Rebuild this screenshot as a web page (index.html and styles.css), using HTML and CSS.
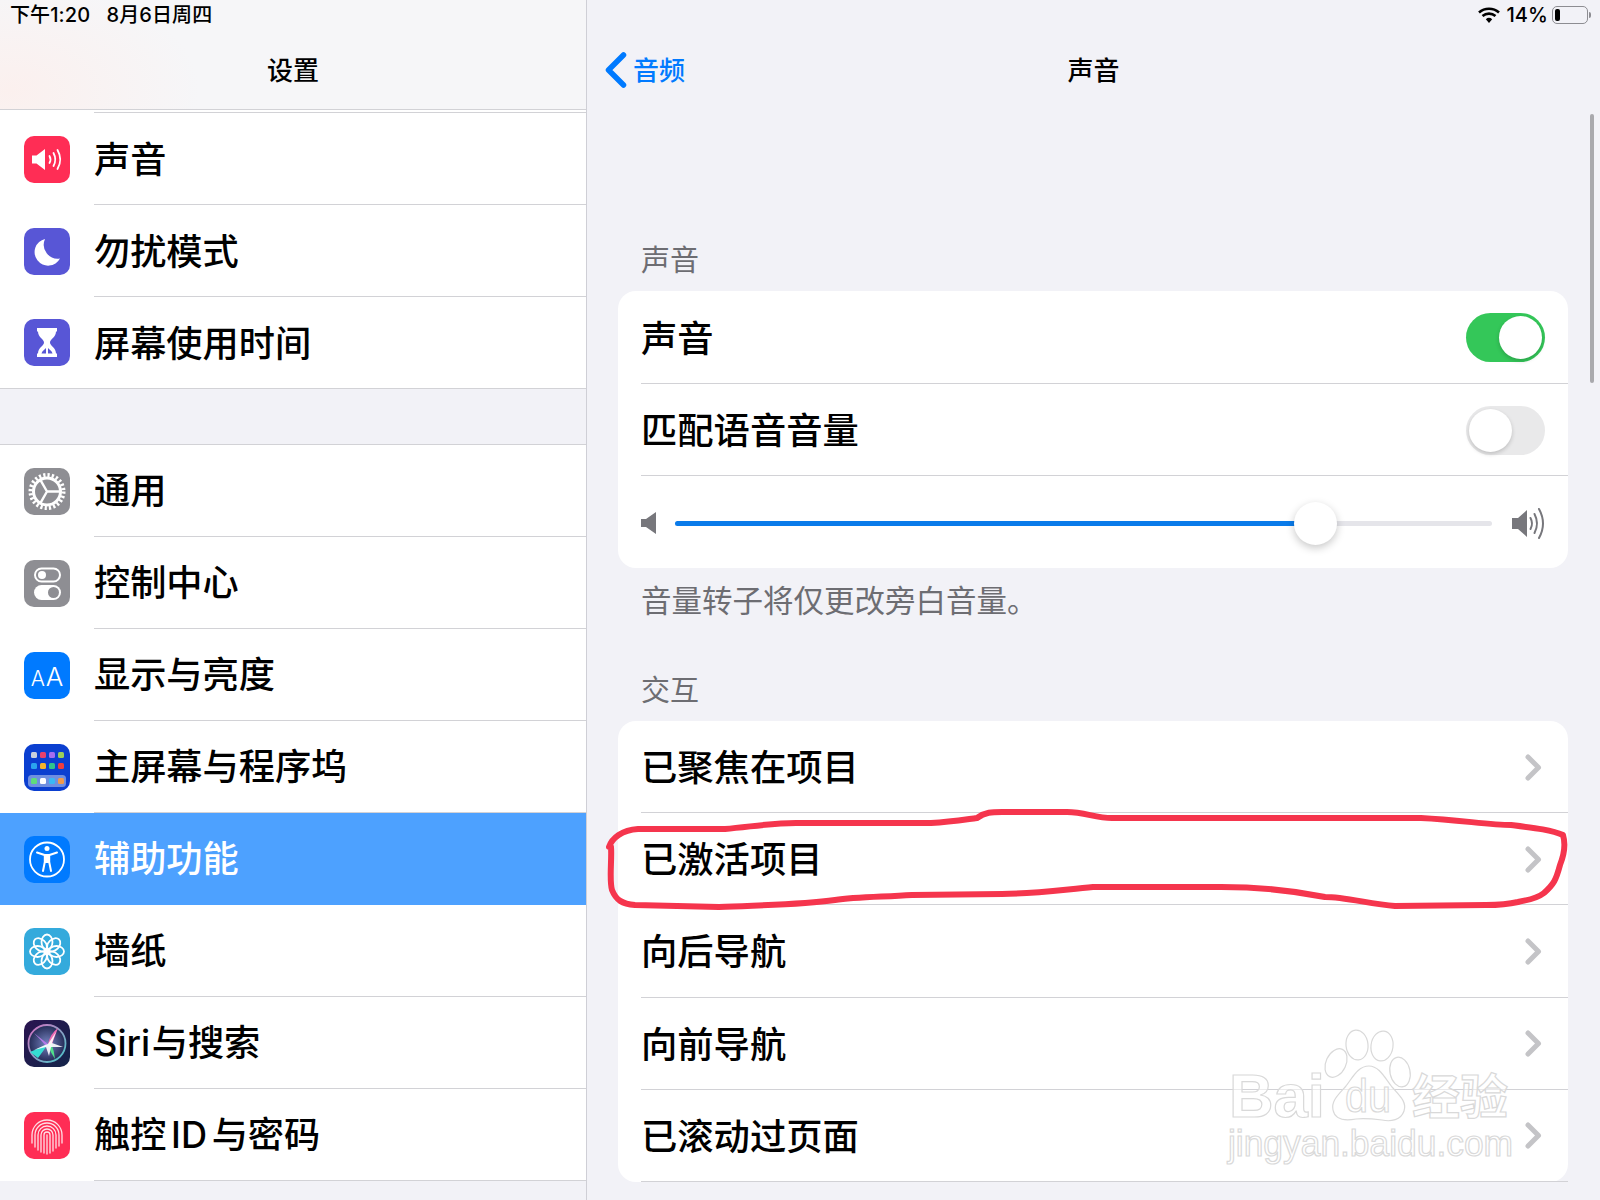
FILE: index.html
```html
<!DOCTYPE html>
<html lang="zh-CN">
<head>
    <meta charset="UTF-8">
    <title>声音</title>
    <link rel="stylesheet" href="styles.css">
</head>
<body>
    <div class="screen">
        <aside class="sidebar">
            <header class="side-head">
                <div class="status">下午1:20&nbsp;&nbsp;&nbsp;8月6日周四</div>
                <div class="nav-title">设置</div>
            </header>

            <ul class="side-list first-group">
                <li class="side-row">
                    <svg class="app-icon" viewBox="0 0 46 47"><rect width="46" height="47" rx="10" fill="#ff2d55"/><path d="M8 19.500h4.500L21 13v21l-8.500-6.500H8z" fill="#fff"/><g fill="none" stroke="#fff" stroke-width="1.800" stroke-linecap="round"><path d="M25.500 20q2 3.500 0 7"/><path d="M29.500 17q3.500 6.500 0 13"/><path d="M33.500 14q5.500 9.500 0 19"/></g></svg>
                    <div class="side-label">声音</div>
                </li>
                <li class="side-row">
                    <svg class="app-icon" viewBox="0 0 46 47"><rect width="46" height="47" rx="10" fill="#5856d6"/><path d="M21 11a13.500 13.500 0 1 0 15 19.500A14 14 0 0 1 21 11z" fill="#fff"/></svg>
                    <div class="side-label">勿扰模式</div>
                </li>
                <li class="side-row">
                    <svg class="app-icon" viewBox="0 0 46 47"><rect width="46" height="47" rx="10" fill="#5856d6"/><path d="M13 9h20v3.500h-1c0 6-6 7.500-6 11s6 5 6 11h1V38H13v-3.500h1c0-6 6-7.500 6-11s-6-5-6-11h-1z" fill="#fff"/><path d="M17.500 34.500c.5-2.500 3-4 4.500-5.500v5.500zM28.500 34.500c-.5-2.500-3-4-4.500-5.500v5.500z" fill="#5856d6"/></svg>
                    <div class="side-label">屏幕使用时间</div>
                </li>
            </ul>

            <ul class="side-list">
                <li class="side-row">
                    <svg class="app-icon" viewBox="0 0 46 47"><rect width="46" height="47" rx="10" fill="#8e8e93"/><circle cx="23" cy="23.500" r="16.500" fill="none" stroke="#fff" stroke-width="4" stroke-dasharray="2.200 2.120"/><circle cx="23" cy="23.500" r="13.500" fill="none" stroke="#fff" stroke-width="3"/><path d="M23 23.500H36M23 23.500l-6.500-11.300M23 23.500l-6.500 11.300" fill="none" stroke="#fff" stroke-width="2.400"/></svg>
                    <div class="side-label">通用</div>
                </li>
                <li class="side-row">
                    <svg class="app-icon" viewBox="0 0 46 47"><rect width="46" height="47" rx="10" fill="#8e8e93"/><rect x="11" y="8.500" width="25" height="13" rx="6.500" fill="none" stroke="#fff" stroke-width="2"/><circle cx="18" cy="15" r="4" fill="#fff"/><rect x="10" y="25" width="27" height="15" rx="7.500" fill="#fff"/><circle cx="29.500" cy="32.500" r="5.500" fill="#8e8e93"/></svg>
                    <div class="side-label">控制中心</div>
                </li>
                <li class="side-row">
                    <div class="app-icon aa-icon"><span class="aa-small">A</span>A</div>
                    <div class="side-label">显示与亮度</div>
                </li>
                <li class="side-row">
                    <svg class="app-icon" viewBox="0 0 46 47"><rect width="46" height="47" rx="10" fill="#0b3fd0"/><g><rect x="7" y="8" width="6" height="6" rx="1.500" fill="#c9d0dc"/><rect x="16" y="8" width="6" height="6" rx="1.500" fill="#e8416d"/><rect x="25" y="8" width="6" height="6" rx="1.500" fill="#a56df0"/><rect x="34" y="8" width="6" height="6" rx="1.500" fill="#9ccf5a"/><rect x="7" y="19" width="6" height="6" rx="1.500" fill="#2aa5ee"/><rect x="16" y="19" width="6" height="6" rx="1.500" fill="#f5b32c"/><rect x="25" y="19" width="6" height="6" rx="1.500" fill="#2fc48d"/><rect x="34" y="19" width="6" height="6" rx="1.500" fill="#ef3e3e"/></g><rect x="4" y="31" width="38" height="12" rx="3.500" fill="#6f8fe0"/><rect x="7" y="34" width="6" height="6" rx="1.500" fill="#5fdc7a"/><rect x="16" y="34" width="6" height="6" rx="1.500" fill="#fff"/><rect x="25" y="34" width="6" height="6" rx="1.500" fill="#39b8f5"/><rect x="34" y="34" width="6" height="6" rx="1.500" fill="#f09a4a"/></svg>
                    <div class="side-label">主屏幕与程序坞</div>
                </li>
                <li class="side-row selected">
                    <svg class="app-icon" viewBox="0 0 46 47"><rect width="46" height="47" rx="10" fill="#007aff"/><circle cx="23" cy="23.500" r="17" fill="none" stroke="#fff" stroke-width="1.800"/><circle cx="23" cy="12.500" r="2.500" fill="#fff"/><path d="M13 16.500l7.500 2.500h5l7.500-2.500M20.800 19v7l-1.800 9M25.200 19v7l1.800 9" fill="none" stroke="#fff" stroke-width="2" stroke-linecap="round" stroke-linejoin="round"/><path d="M20.800 19h4.400v8h-4.400z" fill="#fff"/></svg>
                    <div class="side-label">辅助功能</div>
                </li>
                <li class="side-row">
                    <svg class="app-icon" viewBox="0 0 46 47"><rect width="46" height="47" rx="10" fill="#34aadc"/><g fill="none" stroke="#fff" stroke-width="1.800"><ellipse cx="23" cy="14" rx="5.500" ry="7.500"/><ellipse cx="23" cy="14" rx="5.500" ry="7.500" transform="rotate(45 23 23.500)"/><ellipse cx="23" cy="14" rx="5.500" ry="7.500" transform="rotate(90 23 23.500)"/><ellipse cx="23" cy="14" rx="5.500" ry="7.500" transform="rotate(135 23 23.500)"/><ellipse cx="23" cy="14" rx="5.500" ry="7.500" transform="rotate(180 23 23.500)"/><ellipse cx="23" cy="14" rx="5.500" ry="7.500" transform="rotate(225 23 23.500)"/><ellipse cx="23" cy="14" rx="5.500" ry="7.500" transform="rotate(270 23 23.500)"/><ellipse cx="23" cy="14" rx="5.500" ry="7.500" transform="rotate(315 23 23.500)"/></g><circle cx="23" cy="23.500" r="2.500" fill="#fff"/></svg>
                    <div class="side-label">墙纸</div>
                </li>
                <li class="side-row">
                    <svg class="app-icon" viewBox="0 0 46 47">
                        <defs>
                            <linearGradient id="siri-bg" x1="0" y1="0" x2="1" y2="1"><stop offset="0" stop-color="#2a1450"/><stop offset="1" stop-color="#14254a"/></linearGradient>
                            <radialGradient id="siri-ball"><stop offset="0" stop-color="#7583c0"/><stop offset="1" stop-color="#232a55"/></radialGradient>
                            <linearGradient id="siri-ring" x1="0" y1="0" x2="1" y2="1"><stop offset="0" stop-color="#d86fc0"/><stop offset="1" stop-color="#45c8c8"/></linearGradient>
                        </defs>
                        <rect width="46" height="47" rx="10" fill="url(#siri-bg)"/>
                        <circle cx="23" cy="23.500" r="18.500" fill="url(#siri-ball)" stroke="url(#siri-ring)" stroke-width="1.800"/>
                        <path d="M6 32Q18 27 24 24Q20 30 14 38z" fill="#35dcd2"/>
                        <path d="M24 24Q26 32 31 39Q30 30 27 23z" fill="#4fe08a"/>
                        <path d="M24 24Q26 14 34 8Q31 16 28 24z" fill="#ef6ab4"/>
                        <path d="M24 24Q16 18 10 13Q17 20 22 26z" fill="#b47ae8"/>
                        <path d="M24 24L32 12 28 23l11 4-12 0-2 9-3-9-12 3 11-5z" fill="#fff" opacity=".9"/>
                    </svg>
                    <div class="side-label tight-siri">Siri 与搜索</div>
                </li>
                <li class="side-row">
                    <svg class="app-icon" viewBox="0 0 46 47"><rect width="46" height="47" rx="10" fill="#ff2d55"/><g fill="none" stroke="#fff" stroke-opacity=".85" stroke-width="1.300" stroke-linecap="round"><path d="M8 31V23a15 15 0 0 1 30 0v8"/><path d="M11 35V23a12 12 0 0 1 24 0v11"/><path d="M14 38V23a9 9 0 0 1 18 0v13"/><path d="M17 40V23a6 6 0 0 1 12 0v16"/><path d="M20 41V23a3 3 0 0 1 6 0v18"/><path d="M23 23v19"/></g></svg>
                    <div class="side-label tight-id">触控 ID 与密码</div>
                </li>
            </ul>
        </aside>

        <main class="detail">
            <header class="detail-head">
                <div class="status status-right">
                    <svg class="wifi" viewBox="0 0 22 16"><path d="M11 16l-3.200-3.800a5 5 0 0 1 6.400 0z" fill="#000"/><path d="M1 5.500a15 15 0 0 1 20 0M4.500 9a10 10 0 0 1 13 0" fill="none" stroke="#000" stroke-width="2.600"/></svg>
                    <span>14%</span>
                    <div class="battery"><div class="battery-fill"></div></div>
                    <div class="battery-nub"></div>
                </div>
                <div class="detail-nav">
                    <div class="back">
                        <svg class="back-arrow" viewBox="0 0 22 36"><path d="M18.500 3L3.500 18l15 15" fill="none" stroke="#007aff" stroke-width="5.500" stroke-linecap="round" stroke-linejoin="round"/></svg>
                        <span class="back-text">音频</span>
                    </div>
                    <div class="nav-title">声音</div>
                    <div></div>
                </div>
            </header>

            <div class="scroll-thumb"></div>

            <div class="detail-body">
                <div class="section-title top">声音</div>
                <section class="card">
                    <div class="card-row tall"><div class="card-inner">
                        <span>声音</span>
                        <div class="toggle on"><div class="knob"></div></div>
                    </div></div>
                    <div class="card-row"><div class="card-inner">
                        <span>匹配语音音量</span>
                        <div class="toggle"><div class="knob"></div></div>
                    </div></div>
                    <div class="slider-row">
                        <svg class="vol-low" viewBox="0 0 15 22"><path d="M0 7h5L15 0v22L5 15H0z" fill="#77777c"/></svg>
                        <div class="track">
                            <div class="track-fill"></div>
                            <div class="thumb"></div>
                        </div>
                        <svg class="vol-high" viewBox="0 0 34 33"><path d="M0 11h6l9-8v27l-9-8H0z" fill="#77777c"/><g fill="none" stroke="#77777c" stroke-width="2" stroke-linecap="round"><path d="M18.500 11q3 5.500 0 11"/><path d="M22.500 7q5 9.500 0 19"/><path d="M27 2q8 14.500 0 29"/></g></svg>
                    </div>
                </section>
                <p class="card-note">音量转子将仅更改旁白音量。</p>

                <div class="section-title">交互</div>
                <section class="card nav-card">
                    <div class="card-row short"><div class="card-inner"><span>已聚焦在项目</span><svg class="chevron" viewBox="0 0 17 27"><path d="M3 3l10.500 10.500L3 24" fill="none" stroke="#c4c4c7" stroke-width="5" stroke-linecap="round" stroke-linejoin="round"/></svg></div></div>
                    <div class="card-row"><div class="card-inner"><span>已激活项目</span><svg class="chevron" viewBox="0 0 17 27"><path d="M3 3l10.500 10.500L3 24" fill="none" stroke="#c4c4c7" stroke-width="5" stroke-linecap="round" stroke-linejoin="round"/></svg></div></div>
                    <div class="card-row"><div class="card-inner"><span>向后导航</span><svg class="chevron" viewBox="0 0 17 27"><path d="M3 3l10.500 10.500L3 24" fill="none" stroke="#c4c4c7" stroke-width="5" stroke-linecap="round" stroke-linejoin="round"/></svg></div></div>
                    <div class="card-row"><div class="card-inner"><span>向前导航</span><svg class="chevron" viewBox="0 0 17 27"><path d="M3 3l10.500 10.500L3 24" fill="none" stroke="#c4c4c7" stroke-width="5" stroke-linecap="round" stroke-linejoin="round"/></svg></div></div>
                    <div class="card-row"><div class="card-inner"><span>已滚动过页面</span><svg class="chevron" viewBox="0 0 17 27"><path d="M3 3l10.500 10.500L3 24" fill="none" stroke="#c4c4c7" stroke-width="5" stroke-linecap="round" stroke-linejoin="round"/></svg></div></div>
                </section>
            </div>
        </main>

        <!-- marker drawn over the screenshot -->
        <svg class="overlay" viewBox="0 0 1600 1200">
            <path class="marker" d="M609 847C612 838 622 830 638 829L725 829C750 827 770 823 796 823L931 823C950 822 962 820 977 818C985 812 992 812 1002 812L1067 812C1085 812 1095 818 1112 818L1421 818C1460 820 1490 825 1511 825C1535 828 1552 830 1563 835C1566 845 1564 855 1560 865C1556 880 1554 884 1544 893C1535 900 1525 900 1518 902C1505 905 1495 905 1486 905L1395 906C1370 904 1345 897 1325 897C1290 890 1250 887 1221 887L1093 887C1060 890 1030 894 1002 894L912 895C880 897 855 897 835 900C800 905 760 905 719 907L635 905C622 904 616 900 612 890C609 880 612 860 611 847"/>
            <g class="paw">
                <ellipse cx="1336" cy="1063" rx="10" ry="15" transform="rotate(25 1336 1063)"/>
                <ellipse cx="1357" cy="1045" rx="11" ry="15" transform="rotate(-6 1357 1045)"/>
                <ellipse cx="1382" cy="1046" rx="11" ry="15" transform="rotate(8 1382 1046)"/>
                <ellipse cx="1400" cy="1072" rx="10" ry="15" transform="rotate(-12 1400 1072)"/>
                <path d="M1369 1066c10 0 16 12 23 21 8 9 15 15 12 24-3 9-13 11-22 9-8-1-17-2-26-1-11 2-21 1-23-9-2-9 5-15 13-24 7-9 12-20 23-20z"/>
            </g>
            <text class="wm wm-big" x="1229" y="1117" textLength="96" lengthAdjust="spacingAndGlyphs">Bai</text>
            <text class="wm wm-du" x="1345" y="1112" textLength="46" lengthAdjust="spacingAndGlyphs">du</text>
            <text class="wm wm-cn" x="1412" y="1114">经验</text>
            <text class="wm wm-url" x="1228" y="1156" textLength="285" lengthAdjust="spacingAndGlyphs">jingyan.baidu.com</text>
        </svg>
    </div>
</body>
</html>
```

FILE: styles.css
```css
/* Pantalla de ajustes */
* {
    box-sizing: border-box;
}

body {
    margin: 0;
    background-color: #f2f2f7;
    font-family: Inter, "Noto Sans CJK SC", sans-serif;
    color: #000;
}

ul {
    list-style: none;
    margin: 0;
    padding: 0;
}

.screen {
    position: relative;
    display: flex;
    width: 1600px;
    height: 1200px;
    overflow: hidden;
}

/* sidebar */
.sidebar {
    flex: 0 0 587px;
    height: 1200px;
    background-color: #f2f2f7;
    border-right: 1px solid #cfcfd6;
    overflow: hidden;
}

.side-head {
    height: 110px;
    border-bottom: 1px solid #d2d2d6;
    background-color: #f6f6f8;
    background-image: radial-gradient(ellipse 190px 110px at 10px 90px, #fbf0ee, rgba(251, 240, 238, 0));
}

.status {
    height: 30px;
    padding-left: 10px;
    font-size: 20px;
    font-weight: 500;
    letter-spacing: 0.1px;
    line-height: 30px;
    white-space: nowrap;
}

.nav-title {
    height: 80px;
    font-size: 26px;
    font-weight: 500;
    line-height: 82px;
    text-align: center;
}

.side-list {
    background-color: #fff;
    border-top: 1px solid #d2d2d6;
}

.first-group {
    padding-top: 2px;
    border-top: none;
    border-bottom: 1px solid #d2d2d6;
    margin-bottom: 55px;
}

.first-group::before {
    content: "";
    display: block;
    height: 1px;
    margin-left: 94px;
    background-color: #d2d2d6;
}

.side-row {
    display: flex;
    align-items: center;
    height: 92px;
    padding-left: 24px;
}

.first-group .side-label {
    padding-bottom: 3px;
}

.first-group .side-row:last-child {
    height: 91px;
}

.first-group .side-row:last-child .side-label {
    height: 91px;
    border-bottom: none;
}

.app-icon {
    flex: 0 0 46px;
    width: 46px;
    height: 47px;
    margin-right: 24px;
}

.side-label {
    display: flex;
    align-items: center;
    flex: 1;
    height: 92px;
    padding-bottom: 5px;
    font-size: 36.200px;
    font-weight: 500;
    border-bottom: 1px solid #d2d2d6;
    white-space: pre;
}

.side-label.tight-siri {
    word-spacing: -8px;
}

.side-label.tight-id {
    word-spacing: -5px;
}

.side-row.selected {
    background-color: #4da1ff;
    color: #fff;
}

.side-row.selected .side-label {
    border-bottom-color: #4da1ff;
}

.aa-icon {
    display: flex;
    align-items: baseline;
    justify-content: center;
    padding-top: 9px;
    border-radius: 10px;
    background-color: #007aff;
    color: #fff;
    font-size: 26px;
    font-weight: 300;
}

.aa-small {
    font-size: 21px;
    margin-right: 1px;
}

/* detail */
.detail {
    position: relative;
    flex: 1;
}

.detail-head {
    height: 110px;
}

.status-right {
    display: flex;
    align-items: center;
    justify-content: flex-end;
    padding: 0 9px 0 0;
}

.wifi {
    width: 22px;
    height: 16px;
    margin-right: 6px;
}

.battery {
    width: 36px;
    height: 18px;
    margin-left: 4px;
    padding: 2px;
    border: 1.500px solid #8d8d92;
    border-radius: 5px;
}

.battery-fill {
    width: 5px;
    height: 100%;
    border-radius: 2px;
    background-color: #000;
}

.battery-nub {
    width: 2px;
    height: 6px;
    margin-left: 1px;
    border-radius: 0 2px 2px 0;
    background-color: #8d8d92;
}

.detail-nav {
    display: grid;
    grid-template-columns: 1fr auto 1fr;
    align-items: center;
    height: 80px;
}

.back {
    display: flex;
    align-items: center;
    padding-left: 18px;
    color: #007aff;
    font-size: 26px;
    font-weight: 500;
}

.back-arrow {
    width: 22px;
    height: 36px;
    margin-right: 6px;
}

.back-text {
    margin-bottom: 3px;
}

.scroll-thumb {
    position: absolute;
    top: 114px;
    right: 6px;
    width: 4px;
    height: 269px;
    border-radius: 2px;
    background-color: #a9a9ad;
}

.detail-body {
    padding: 128px 32px 0 31px;
}

.section-title {
    height: 43px;
    padding-left: 23px;
    color: #6d6d72;
    font-size: 29px;
    line-height: 25px;
}

.section-title.top {
    height: 53px;
    line-height: 45px;
}

.card {
    border-radius: 18px;
    background-color: #fff;
}

.card-row {
    height: 92px;
    padding-left: 23px;
}

.card-row.tall {
    height: 93px;
}

.nav-card .card-row {
    height: 92.250px;
}

.nav-card .card-row.short {
    height: 92px;
}

.card-inner {
    display: flex;
    align-items: center;
    justify-content: space-between;
    height: 100%;
    padding-right: 23px;
    padding-bottom: 3px;
    border-bottom: 1px solid #d2d2d6;
    font-size: 36.300px;
    font-weight: 500;
}

.chevron {
    flex: none;
    width: 17px;
    height: 27px;
    margin-top: 4px;
    margin-right: 3px;
}

.toggle {
    width: 79px;
    height: 49px;
    margin-top: 4px;
    padding: 3px;
    border-radius: 25px;
    background-color: #e9e9ea;
}

.toggle.on {
    display: flex;
    justify-content: flex-end;
    background-color: #34c759;
}

.knob {
    width: 43px;
    height: 43px;
    border-radius: 50%;
    background-color: #fff;
    box-shadow: 0 2px 4px rgba(0, 0, 0, 0.18);
}

.slider-row {
    display: flex;
    align-items: center;
    height: 92px;
    padding: 2px 22px 0 23px;
}

.vol-low {
    width: 15px;
    height: 22px;
    margin-right: 19px;
}

.vol-high {
    width: 34px;
    height: 33px;
    margin-left: 20px;
}

.track {
    position: relative;
    flex: 1;
    height: 5px;
    border-radius: 3px;
    background-color: #e5e5ea;
}

.track-fill {
    width: 76.500%;
    height: 100%;
    border-radius: 3px 0 0 3px;
    background-color: #0a7bea;
}

.thumb {
    position: absolute;
    top: -19px;
    left: 75.800%;
    width: 43px;
    height: 43px;
    border-radius: 50%;
    background-color: #fff;
    box-shadow: 0 3px 9px rgba(0, 0, 0, 0.22);
}

.card-note {
    height: 110px;
    margin: 0;
    padding: 12px 0 0 23px;
    color: #6d6d72;
    font-size: 30.500px;
    line-height: 42px;
}

/* over the screenshot */
.overlay {
    position: absolute;
    top: 0;
    left: 0;
    width: 1600px;
    height: 1200px;
    pointer-events: none;
}

.marker {
    fill: none;
    stroke: #f5354d;
    stroke-width: 6;
    stroke-linecap: round;
    stroke-linejoin: round;
}

.paw ellipse,
.paw path,
.wm {
    fill: rgba(255, 255, 255, 0.55);
    stroke: #d9d9d9;
    stroke-width: 1.200;
}

.wm {
    font-family: "Liberation Sans", "Noto Sans CJK SC", sans-serif;
}

.wm-big {
    font-size: 62px;
    font-weight: 700;
}

.wm-du {
    font-size: 46px;
}

.wm-cn {
    font-size: 48px;
    font-weight: 700;
}

.wm-url {
    font-size: 36px;
}
```
